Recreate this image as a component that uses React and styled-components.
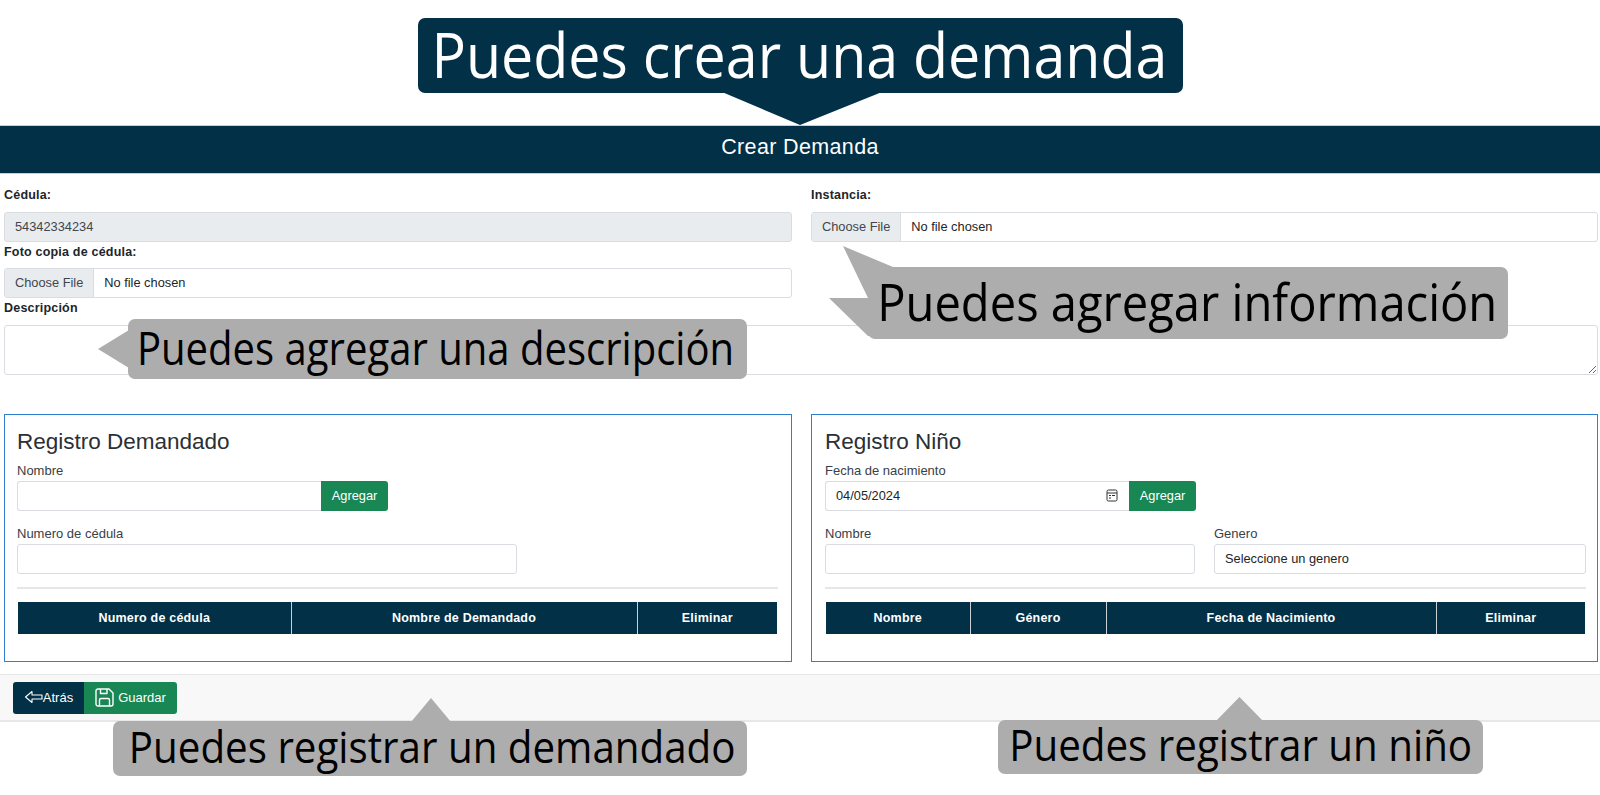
import React from "react";
import styled, { createGlobalStyle } from "styled-components";

const DARK = "#023047";
const GREEN = "#198754";
const GREY = "#adadad";
const LINE = "#d9dde1";

const Global = createGlobalStyle`
  html, body { margin: 0; padding: 0; background: #fff; }
  body { font-family: "Liberation Sans", Arial, sans-serif; color: #212529; overflow: hidden; }
  * { box-sizing: border-box; }
`;

const Page = styled.div`
  position: relative;
  width: 1600px;
  height: 795px;
  padding-top: 125px;
  overflow: hidden;
`;
const Header = styled.h1`
  margin: 0;
  height: 49px;
  padding-bottom: 5px;
  background: ${DARK};
  border-top: 1px solid #c9d0d4;
  border-bottom: 1px solid #c9d0d4;
  color: #fff;
  font-size: 21.5px;
  font-weight: 400;
  letter-spacing: 0.35px;
  display: flex;
  align-items: center;
  justify-content: center;
`;
const FormGrid = styled.div`
  display: grid;
  grid-template-columns: 788px 787px;
  column-gap: 19px;
  padding: 0 2px 0 4px;
`;
const Column = styled.div`
  display: flex;
  flex-direction: column;
`;
const StrongLabel = styled.label`
  display: flex;
  align-items: center;
  height: ${(p) => p.$h}px;
  padding: ${(p) => p.$pt || 0}px 0 ${(p) => p.$pb || 0}px;
  font-size: 12.5px;
  font-weight: 700;
  letter-spacing: 0.2px;
  color: #212529;
`;
const inputBase = `
  height: 30px;
  border: 1px solid ${LINE};
  border-radius: 3px;
  background: #fff;
  font-family: "Liberation Sans", Arial, sans-serif;
  font-size: 12.8px;
  color: #212529;
  outline: none;
`;
const TextInput = styled.input`
  ${inputBase}
  display: block;
  width: ${(p) => p.$w || "100%"};
  padding: 0 10px 2px;
  &:disabled { background: #e9ecef; color: #3f464c; }
  ${(p) => p.$joined && "border-radius: 3px 0 0 3px; border-right: 0;"}
`;
const FileBox = styled.div`
  ${inputBase}
  display: flex;
  align-items: center;
  overflow: hidden;
`;
const FileButton = styled.span`
  display: flex;
  align-items: center;
  height: 100%;
  padding: 0 10px 2px;
  background: #e9ecef;
  border-right: 1px solid ${LINE};
  color: #3f464c;
`;
const FileName = styled.span`
  padding: 0 0 2px 10px;
`;
const DescBlock = styled.div`
  padding: 0 2px 0 4px;
`;
const TextArea = styled.textarea`
  ${inputBase}
  display: block;
  width: 100%;
  height: 50px;
  resize: vertical;
`;
const Panels = styled.div`
  display: grid;
  grid-template-columns: 788px 787px;
  column-gap: 19px;
  padding: 39px 2px 0 4px;
`;
const Panel = styled.section`
  height: 248px;
  border: 1px solid #2f80cf;
  padding: 12px 0 0 ${(p) => p.$left}px;
`;
const PanelTitle = styled.h2`
  margin: 0 0 3px;
  height: 29px;
  display: flex;
  align-items: center;
  font-size: 22.5px;
  font-weight: 400;
  color: #2b3035;
`;
const FieldLabel = styled.label`
  display: flex;
  align-items: center;
  height: 22px;
  font-size: 13px;
  color: #3a4046;
`;
const InputRow = styled.div`
  display: flex;
  width: 371px;
`;
const AddButton = styled.button`
  flex: none;
  width: 67px;
  height: 30px;
  border: 0;
  border-radius: 0 3px 3px 0;
  background: ${GREEN};
  color: #fff;
  font-family: inherit;
  font-size: 12.8px;
  padding: 0 0 2px;
`;
const DateBox = styled.div`
  ${inputBase}
  flex: 1;
  display: flex;
  align-items: center;
  justify-content: space-between;
  padding: 0 11px 2px 10px;
  border-radius: 3px 0 0 3px;
  border-right: 0;
`;
const FieldStack = styled.div`
  margin-top: 11px;
`;
const TwoFields = styled.div`
  display: grid;
  grid-template-columns: 370px 372px;
  column-gap: 19px;
  margin-top: 11px;
`;
const Select = styled.select`
  ${inputBase}
  display: block;
  width: 100%;
  padding: 0 10px 2px;
  appearance: none;
`;
const Rule = styled.hr`
  width: 761px;
  margin: 13px 0 0;
  border: 0;
  border-top: 2px solid #e4e6e8;
`;
const Table = styled.table`
  width: 759px;
  margin: 13px 0 0 1px;
  border-collapse: collapse;
  table-layout: fixed;
`;
const Th = styled.th`
  height: 32px;
  padding: 0;
  background: ${DARK};
  color: #fff;
  font-size: 12.5px;
  font-weight: 700;
  letter-spacing: 0.2px;
  text-align: center;
  border-left: 1px solid #c9d0d4;
  &:first-child { border-left: 0; }
`;
const Footer = styled.footer`
  margin-top: 12px;
  height: 48px;
  background: #f8f8f8;
  border-top: 1px solid #e7e7e7;
  border-bottom: 2px solid #e7e7e7;
  padding: 7px 0 0 13px;
  display: flex;
  align-items: flex-start;
`;
const FootButton = styled.button`
  display: flex;
  align-items: center;
  justify-content: center;
  gap: ${(p) => p.$gap}px;
  width: ${(p) => p.$w}px;
  height: 32px;
  border: 0;
  padding: 0 0 2px;
  background: ${(p) => p.$bg};
  border-radius: ${(p) => p.$radius};
  color: #fff;
  font-family: inherit;
  font-size: 13px;
`;

const Callout = styled.div`
  position: absolute;
  left: ${(p) => p.$x}px;
  top: ${(p) => p.$y}px;
  width: ${(p) => p.$w}px;
  height: ${(p) => p.$h}px;
  background: ${(p) => (p.$dark ? DARK : GREY)};
  border-radius: 7px;
  color: ${(p) => (p.$dark ? "#fff" : "#000")};
  display: flex;
  align-items: center;
  justify-content: center;
`;
const CalloutText = styled.span`
  display: block;
  flex: none;
  white-space: nowrap;
  font-family: "Open Sans", sans-serif;
  font-size: ${(p) => p.$size}px;
  line-height: 1;
  transform: scaleX(${(p) => p.$sx});
  position: relative;
  left: ${(p) => p.$dx || 0}px;
  top: ${(p) => p.$dy || 0}px;
`;
const Tail = styled.svg`
  position: absolute;
  left: ${(p) => p.$x}px;
  top: ${(p) => p.$y}px;
  overflow: visible;
`;

const BackArrow = () => (
  <svg width="19" height="14" viewBox="0 0 19 14" fill="none" stroke="#fff" strokeWidth="1.1">
    <path d="M18 5H8V1.5L1.5 7 8 12.500V9h10z" strokeLinejoin="round" />
  </svg>
);
const SaveIcon = () => (
  <svg width="19" height="19" viewBox="0 0 19 19" fill="none" stroke="#fff" strokeWidth="1.4" strokeLinejoin="round">
    <path d="M3 1h11l4 4v11a2 2 0 0 1-2 2H3a2 2 0 0 1-2-2V3a2 2 0 0 1 2-2z" />
    <path d="M5.500 1v4.500h6.500V1" />
    <path d="M4.500 18v-6a1.500 1.500 0 0 1 1.500-1.500h7a1.500 1.500 0 0 1 1.500 1.500v6" />
  </svg>
);
const CalendarIcon = () => (
  <svg width="12" height="13" viewBox="0 0 12 13" fill="none" stroke="#333" strokeWidth="1">
    <rect x="1" y="1" width="10" height="11" rx="1.500" />
    <path d="M1 4h10" />
    <path d="M3 6.500h2M6 6.500h3M3 9h2" strokeWidth="1.200" />
  </svg>
);

const Head = ({ cols }) => (
  <Table>
    <colgroup>
      {cols.map(([t, w]) => (
        <col key={t} width={w} />
      ))}
    </colgroup>
    <thead>
      <tr>
        {cols.map(([t]) => (
          <Th key={t}>{t}</Th>
        ))}
      </tr>
    </thead>
  </Table>
);

export default function App() {
  return (
    <Page>
      <Global />
      <Header>Crear Demanda</Header>
      <FormGrid>
        <Column>
          <StrongLabel $h={38} $pt={4}>Cédula:</StrongLabel>
          <TextInput disabled value="54342334234" readOnly />
          <StrongLabel $h={26} $pb={7}>Foto copia de cédula:</StrongLabel>
          <FileBox>
            <FileButton>Choose File</FileButton>
            <FileName>No file chosen</FileName>
          </FileBox>
        </Column>
        <Column>
          <StrongLabel $h={38} $pt={4}>Instancia:</StrongLabel>
          <FileBox>
            <FileButton>Choose File</FileButton>
            <FileName>No file chosen</FileName>
          </FileBox>
        </Column>
      </FormGrid>
      <DescBlock>
        <StrongLabel $h={27} $pb={8}>Descripción</StrongLabel>
        <TextArea />
      </DescBlock>
      <Panels>
        <Panel $left={12}>
          <PanelTitle>Registro Demandado</PanelTitle>
          <FieldLabel>Nombre</FieldLabel>
          <InputRow>
            <TextInput $joined />
            <AddButton>Agregar</AddButton>
          </InputRow>
          <FieldStack>
            <FieldLabel>Numero de cédula</FieldLabel>
            <TextInput $w="500px" />
          </FieldStack>
          <Rule />
          <Head cols={[["Numero de cédula", 273], ["Nombre de Demandado", 346], ["Eliminar", 140]]} />
        </Panel>
        <Panel $left={13}>
          <PanelTitle>Registro Niño</PanelTitle>
          <FieldLabel>Fecha de nacimiento</FieldLabel>
          <InputRow>
            <DateBox>
              04/05/2024
              <CalendarIcon />
            </DateBox>
            <AddButton>Agregar</AddButton>
          </InputRow>
          <TwoFields>
            <div>
              <FieldLabel>Nombre</FieldLabel>
              <TextInput />
            </div>
            <div>
              <FieldLabel>Genero</FieldLabel>
              <Select defaultValue="">
                <option value="">Seleccione un genero</option>
              </Select>
            </div>
          </TwoFields>
          <Rule />
          <Head cols={[["Nombre", 144], ["Género", 136], ["Fecha de Nacimiento", 330], ["Eliminar", 149]]} />
        </Panel>
      </Panels>
      <Footer>
        <FootButton $w={71} $gap={0} $bg={DARK} $radius="3px 0 0 3px">
          <BackArrow />
          Atrás
        </FootButton>
        <FootButton $w={93} $gap={4} $bg={GREEN} $radius="0 3px 3px 0">
          <SaveIcon />
          Guardar
        </FootButton>
      </Footer>

      <Callout $dark $x={418} $y={18} $w={765} $h={75}>
        <Tail $x={304} $y={74} width="160" height="33">
          <path d="M0 0 L78 33 L160 0 Z" fill={DARK} />
        </Tail>
        <CalloutText $size={63} $sx={0.91} $dx={-1} $dy={-2}>Puedes crear una demanda</CalloutText>
      </Callout>
      <Callout $x={868} $y={267} $w={640} $h={72}>
        <Tail $x={-39} $y={-21} width="70" height="93">
          <path d="M14 0 L64 21 L64 90 L42 90 L39 90 L0 52 L39 52 Z" fill={GREY} />
        </Tail>
        <CalloutText $size={52} $sx={0.906} $dx={-1} $dy={-2}>Puedes agregar información</CalloutText>
      </Callout>
      <Callout $x={128} $y={319} $w={619} $h={60}>
        <Tail $x={-30} $y={11} width="31" height="38">
          <path d="M31 0 L0 19 L31 38 Z" fill={GREY} />
        </Tail>
        <CalloutText $size={45} $sx={0.89} $dx={-2} $dy={-2}>Puedes agregar una descripción</CalloutText>
      </Callout>
      <Callout $x={113} $y={721} $w={634} $h={55}>
        <Tail $x={298} $y={-23} width="40" height="24">
          <path d="M0 24 L20 0 L40 24 Z" fill={GREY} />
        </Tail>
        <CalloutText $size={44} $sx={0.916} $dx={2} $dy={-3}>Puedes registrar un demandado</CalloutText>
      </Callout>
      <Callout $x={998} $y={720} $w={485} $h={54}>
        <Tail $x={218} $y={-23} width="47" height="24">
          <path d="M0 24 L23.500 0 L47 24 Z" fill={GREY} />
        </Tail>
        <CalloutText $size={44} $sx={0.916} $dy={-3}>Puedes registrar un niño</CalloutText>
      </Callout>
    </Page>
  );
}
